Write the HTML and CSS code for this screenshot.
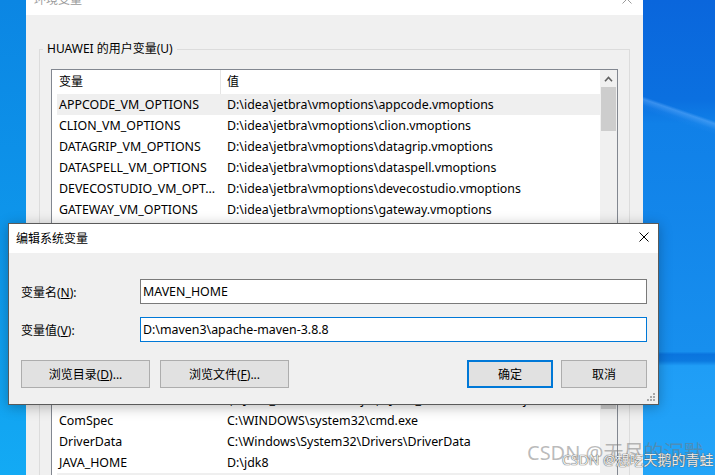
FILE: index.html
```html
<!DOCTYPE html>
<html lang="zh-CN">
<head>
<meta charset="utf-8">
<title>编辑系统变量</title>
<link rel="stylesheet" href="styles.css">
</head>
<body>
<div class="desktop">
  <div class="desk-left"></div>
  <div class="envwin">
    <div class="env-title">
      <span class="env-title-text">环境变量</span>
      <svg class="env-close" width="10" height="10" viewBox="0 0 10 10"><path d="M0.5 0.5 L9.5 9.5 M9.5 0.5 L0.5 9.5" stroke="#9a9a9a" stroke-width="1" fill="none"/></svg>
    </div>
    <div class="env-body">
      <fieldset class="group">
        <legend>HUAWEI 的用户变量(U)</legend>
        <div class="listbox list-user">
          <div class="list-main">
            <div class="list-head"><div class="col-name">变量</div><div class="col-val">值</div></div>
            <div class="row sel"><div class="col-name">APPCODE_VM_OPTIONS</div><div class="col-val">D:\idea\jetbra\vmoptions\appcode.vmoptions</div></div>
            <div class="row"><div class="col-name">CLION_VM_OPTIONS</div><div class="col-val">D:\idea\jetbra\vmoptions\clion.vmoptions</div></div>
            <div class="row"><div class="col-name">DATAGRIP_VM_OPTIONS</div><div class="col-val">D:\idea\jetbra\vmoptions\datagrip.vmoptions</div></div>
            <div class="row"><div class="col-name">DATASPELL_VM_OPTIONS</div><div class="col-val">D:\idea\jetbra\vmoptions\dataspell.vmoptions</div></div>
            <div class="row"><div class="col-name">DEVECOSTUDIO_VM_OPT...</div><div class="col-val">D:\idea\jetbra\vmoptions\devecostudio.vmoptions</div></div>
            <div class="row"><div class="col-name">GATEWAY_VM_OPTIONS</div><div class="col-val">D:\idea\jetbra\vmoptions\gateway.vmoptions</div></div>
            <div class="row"><div class="col-name">GOLAND_VM_OPTIONS</div><div class="col-val">D:\idea\jetbra\vmoptions\goland.vmoptions</div></div>
            <div class="row"><div class="col-name">IDEA_VM_OPTIONS</div><div class="col-val">D:\idea\jetbra\vmoptions\idea.vmoptions</div></div>
          </div>
          <div class="vscroll">
            <div class="sb-up"><svg width="9" height="6" viewBox="0 0 9 6"><path d="M1 5.2 L4.5 1.5 L8 5.2" fill="none" stroke="#606060" stroke-width="1.6"/></svg></div>
            <div class="sb-thumb"></div>
          </div>
        </div>
        <div class="group-buttons">
          <button class="gbtn">新建(N)...</button>
          <button class="gbtn">编辑(E)...</button>
          <button class="gbtn">删除(D)</button>
        </div>
      </fieldset>
      <fieldset class="group group-sys">
        <legend>系统变量(S)</legend>
        <div class="listbox list-sys">
          <div class="list-main">
            <div class="list-head"><div class="col-name">变量</div><div class="col-val">值</div></div>
            <div class="row"><div class="col-name">ACSvcPort</div><div class="col-val">17532</div></div>
            <div class="row"><div class="col-name">CLASSPATH</div><div class="col-val">.;%JAVA_HOME%\lib\dt.jar;%JAVA_HOME%\lib\tools.jar</div></div>
            <div class="row"><div class="col-name">ComSpec</div><div class="col-val">C:\WINDOWS\system32\cmd.exe</div></div>
            <div class="row"><div class="col-name">DriverData</div><div class="col-val">C:\Windows\System32\Drivers\DriverData</div></div>
            <div class="row"><div class="col-name">JAVA_HOME</div><div class="col-val">D:\jdk8</div></div>
            <div class="row sel"><div class="col-name">MAVEN_HOME</div><div class="col-val">D:\maven3\apache-maven-3.8.8</div></div>
          </div>
          <div class="vscroll">
            <div class="sb-up"><svg width="9" height="6" viewBox="0 0 9 6"><path d="M1 5.2 L4.5 1.5 L8 5.2" fill="none" stroke="#606060" stroke-width="1.6"/></svg></div>
            <div class="sb-thumb sb-thumb-sys"></div>
          </div>
        </div>
      </fieldset>
    </div>
  </div>
  <div class="desk-right"></div>
</div>

<div class="dialog">
  <div class="dlg-title">
    <span>编辑系统变量</span>
    <svg class="dlg-close" width="10" height="10" viewBox="0 0 10 10"><path d="M0.5 0.5 L9.5 9.5 M9.5 0.5 L0.5 9.5" stroke="#000" stroke-width="1" fill="none"/></svg>
  </div>
  <div class="dlg-body">
    <div class="field">
      <label for="vname">变量名(<u>N</u>):</label>
      <input id="vname" type="text" value="MAVEN_HOME">
    </div>
    <div class="field">
      <label for="vval">变量值(<u>V</u>):</label>
      <input id="vval" class="focus" type="text" value="D:\maven3\apache-maven-3.8.8">
    </div>
    <div class="dlg-buttons">
      <button class="btn btn-browse">浏览目录(<u>D</u>)...</button>
      <button class="btn btn-browse btn-browse2">浏览文件(<u>F</u>)...</button>
      <button class="btn btn-ok">确定</button>
      <button class="btn btn-cancel">取消</button>
    </div>
  </div>
  <svg class="grip" width="9" height="9" viewBox="0 0 9 9">
    <rect x="6" y="0" width="2" height="2" fill="#a8a8a8"/>
    <rect x="3" y="3" width="2" height="2" fill="#a8a8a8"/>
    <rect x="6" y="3" width="2" height="2" fill="#a8a8a8"/>
    <rect x="0" y="6" width="2" height="2" fill="#a8a8a8"/>
    <rect x="3" y="6" width="2" height="2" fill="#a8a8a8"/>
    <rect x="6" y="6" width="2" height="2" fill="#a8a8a8"/>
  </svg>
</div>

<div class="wm-big">CSDN @无尽的沉默</div>
<div class="wm-small">CSDN @想吃天鹅的青蛙</div>
</body>
</html>
```

FILE: styles.css
```css
* { box-sizing: border-box; }
html, body { margin: 0; padding: 0; }
body {
  width: 715px;
  height: 475px;
  overflow: hidden;
  position: relative;
  font-family: "Noto Sans", "Noto Sans CJK SC", sans-serif;
  font-size: 12px;
  color: #000;
}

.desktop { display: flex; height: 475px; }

.desk-left {
  width: 26px;
  flex: none;
  background: linear-gradient(to bottom, #0b86e3 0%, #0e96eb 50%, #13aaf4 100%);
}
.desk-right {
  flex: 1;
  background:
    linear-gradient(199deg, transparent 0 24.2%, rgba(110,180,255,.45) 24.8%, rgba(60,150,245,.15) 26%, transparent 27%),
    linear-gradient(to bottom, #0a66dc 0%, #0b70e0 21%, #1080e8 26%, #178fee 74%, #0a74de 74.6%, #0c7ae0 76%, #1f9df6 77%, #23a5f8 100%);
}

/* background window */
.envwin {
  width: 617px;
  flex: none;
  margin-top: -15px;
  height: 490px;
  background: #f0f0f0;
  display: flex;
  flex-direction: column;
  overflow: hidden;
}
.env-title {
  height: 30px;
  flex: none;
  background: #fff;
  display: flex;
  align-items: center;
  padding-left: 8px;
  position: relative;
}
.env-title-text { color: #9a9a9a; line-height: 16px; }
.env-close { position: absolute; right: 11px; top: 9px; }

.env-body { padding: 26px 13px 0; }

.group {
  margin: 0;
  border: 1px solid #dcdcdc;
  padding: 12px 11px 8px;
  min-width: 0;
}
.group legend {
  padding: 0 4px;
  margin-left: -8px;
  line-height: 16px;
  height: 16px;
}
.group-sys { margin-top: 10px; }

.listbox {
  display: flex;
  border: 1px solid #828790;
  background: #fff;
  height: 194px;
  overflow: hidden;
}
.list-sys { height: 160px; }

.list-main { flex: 1; padding-left: 5px; overflow: hidden; min-width: 0; }
.list-head { display: flex; height: 24px; margin-left: -5px; }
.list-head .col-name {
  width: 169px;
  padding-left: 7px;
  border-right: 1px solid #e5e5e5;
  line-height: 24px;
}
.list-head .col-val { padding-left: 6px; line-height: 24px; }

.row { display: flex; height: 21px; line-height: 21px; white-space: nowrap; font-size: 12.4px; }
.row.sel { background: #efefef; }
.row .col-name { width: 163px; flex: none; padding-left: 2px; overflow: hidden; }
.row .col-val { flex: 1; padding-left: 7px; overflow: hidden; }

.vscroll { width: 17px; flex: none; background: #f0f0f0; display: flex; flex-direction: column; }
.sb-up { height: 17px; display: flex; align-items: center; justify-content: center; }
.sb-up svg { display: block; }
.sb-thumb { height: 44px; margin: 0 1px; background: #cdcdcd; }
.sb-thumb-sys { height: 48px; }

.group-buttons { display: flex; justify-content: flex-end; gap: 8px; margin-top: 10px; }
.gbtn {
  height: 23px;
  width: 86px;
  border: 1px solid #adadad;
  background: #e1e1e1;
  font: inherit;
  padding: 0;
}

/* dialog */
.dialog {
  position: absolute;
  left: 8px;
  top: 223px;
  width: 651px;
  height: 182px;
  border: 1px solid #5a5a5a;
  background: #f0f0f0;
  box-shadow: 0 2px 12px rgba(0,0,0,.28);
  display: flex;
  flex-direction: column;
}
.dlg-title {
  height: 29px;
  flex: none;
  background: #fff;
  display: flex;
  align-items: center;
  padding-left: 7px;
  position: relative;
  line-height: 16px;
}
.dlg-close { position: absolute; right: 9px; top: 8px; }

.dlg-body {
  flex: 1;
  padding: 26px 11px 0 12px;
  display: flex;
  flex-direction: column;
}
.field { display: flex; align-items: center; height: 25px; }
.field + .field { margin-top: 13px; }
.field label { width: 119px; flex: none; }
.field input {
  flex: 1;
  height: 25px;
  border: 1px solid #7a7a7a;
  padding: 0 2px;
  font: inherit;
  font-size: 12.4px;
  color: #000;
  background: #fff;
  outline: none;
  margin: 0;
}
.field input.focus { border-color: #0078d7; }

.dlg-buttons { display: flex; margin-top: 18px; }
.btn {
  height: 28px;
  border: 1px solid #adadad;
  background: #e1e1e1;
  font: inherit;
  color: #000;
  padding: 0;
  margin: 0;
}
.btn-browse { width: 129px; }
.btn-browse2 { margin-left: 10px; }
.btn-ok { margin-left: auto; width: 86px; border: 2px solid #0078d7; }
.btn-cancel { margin-left: 8px; width: 86px; }

.grip { position: absolute; right: 2px; bottom: 2px; }

/* watermarks */
.wm-big {
  position: absolute;
  left: 527px;
  top: 441px;
  font-size: 20px;
  line-height: 24px;
  color: rgba(120,120,120,.5);
  white-space: nowrap;
}
.wm-small {
  position: absolute;
  left: 562px;
  top: 451px;
  font-size: 14px;
  line-height: 18px;
  color: rgba(255,255,255,.9);
  text-shadow: 0 0 1px #555, 0 0 1px #555;
  white-space: nowrap;
}
```
